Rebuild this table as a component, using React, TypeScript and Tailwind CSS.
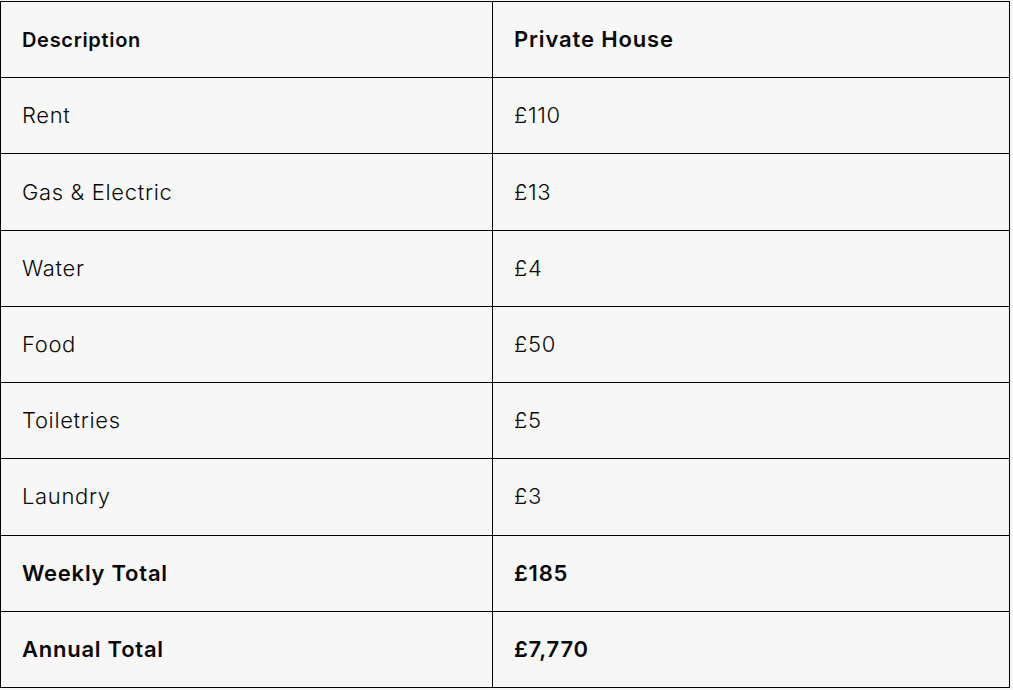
import React from "react";

const rows: [string, string, boolean][] = [
  ["Rent", "£110", false],
  ["Gas & Electric", "£13", false],
  ["Water", "£4", false],
  ["Food", "£50", false],
  ["Toiletries", "£5", false],
  ["Laundry", "£3", false],
  ["Weekly Total", "£185", true],
  ["Annual Total", "£7,770", true],
];

export default function App() {
  return (
    <div
      className="min-h-[690px] w-full bg-[#f7f7f7] pt-px text-[#0a0a0a]"
      style={{ fontFamily: "Inter, 'Noto Sans', sans-serif" }}
    >
      <div className="grid w-[1010px] grid-cols-[492px_517px] border-l border-t border-black">
        <div className="flex h-[76.22px] items-center border-b border-r border-black pl-[21px] text-[20px] font-semibold tracking-[0.68px]">
          Description
        </div>
        <div className="flex h-[76.22px] items-center border-b border-r border-black pl-[21px] text-[22px] font-semibold tracking-[0.85px]">
          Private House
        </div>
        {rows.map(([label, value, bold]) => (
          <React.Fragment key={label}>
            <div
              className={`flex h-[76.22px] items-center border-b border-r border-black pl-[21px] text-[22px] ${
                bold ? "font-semibold tracking-[0.75px]" : "font-light tracking-[0.65px]"
              }`}
            >
              {label}
            </div>
            <div
              className={`flex h-[76.22px] items-center border-b border-r border-black pl-[21px] text-[22px] ${
                bold ? "font-semibold tracking-[0.75px]" : "font-light tracking-[0.65px]"
              }`}
            >
              {value}
            </div>
          </React.Fragment>
        ))}
      </div>
    </div>
  );
}
